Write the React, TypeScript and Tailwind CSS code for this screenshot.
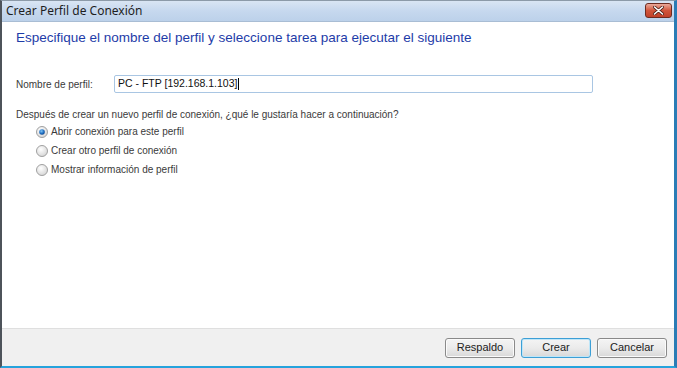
import React from "react";

function Radio({ checked }: { checked?: boolean }) {
  return (
    <svg width="12" height="12" viewBox="0 0 12 12" className="shrink-0">
      <defs>
        <radialGradient id={checked ? "rc" : "ru"} cx="0.4" cy="0.35" r="0.7">
          <stop offset="0" stopColor="#ffffff" />
          <stop offset="1" stopColor="#d4d4d4" />
        </radialGradient>
        <radialGradient id="dot" cx="0.4" cy="0.35" r="0.7">
          <stop offset="0" stopColor="#7fc3f5" />
          <stop offset="0.6" stopColor="#1f6fc1" />
          <stop offset="1" stopColor="#0d3f86" />
        </radialGradient>
      </defs>
      <circle cx="6" cy="6" r="5.5" fill={checked ? "url(#rc)" : "url(#ru)"} stroke="#a0a0a0" strokeWidth="1" />
      {checked && <circle cx="6" cy="6" r="2.8" fill="url(#dot)" />}
    </svg>
  );
}

function Btn({ label, focus }: { label: string; focus?: boolean }) {
  return (
    <button
      className={
        "h-[20px] w-[70px] rounded-[3px] border text-[11px] text-[#222] bg-gradient-to-b from-[#f4f4f4] via-[#ebebeb] to-[#d8d8d8] " +
        (focus ? "border-[#3c9fd6] shadow-[inset_0_0_0_1px_#bfe6f8]" : "border-[#8a8a8a] shadow-[inset_0_0_0_1px_#fbfbfb]")
      }
      style={{ fontFamily: '"Liberation Sans", Arial, sans-serif' }}
    >
      {label}
    </button>
  );
}

export default function App() {
  return (
    <div
      className="w-[677px] h-[368px] flex flex-col overflow-hidden bg-white border-l-2 border-l-[#4d535a] border-t border-t-[#8c9aa8] border-b-2 border-b-[#26a3dc] border-r-[3px] border-r-[#2a7cb5]"
      style={{ fontFamily: '"Liberation Sans", Arial, sans-serif' }}
    >
      <div className="h-[21px] shrink-0 flex items-center justify-between pl-[4px] pr-[2px] bg-gradient-to-b from-[#d9e5f3] via-[#c6d8ee] to-[#bcd1ea] border-b border-b-[#a9bdd4]">
        <span className="text-[12px] text-[#1e1e1e]" style={{ fontFamily: '"Noto Sans", "Liberation Sans", sans-serif' }}>
          Crear Perfil de Conexión
        </span>
        <div className="w-[27px] h-[15px] mt-[-2px] rounded-[3px] border border-[#6d2b20] bg-gradient-to-b from-[#e9a99a] via-[#d1553b] to-[#c0412a] flex items-center justify-center">
          <svg width="11" height="9" viewBox="0 0 11 9">
            <path d="M1.5 1 L9.5 8 M9.5 1 L1.5 8" stroke="#4a1e16" strokeWidth="3" strokeLinecap="round" />
            <path d="M1.5 1 L9.5 8 M9.5 1 L1.5 8" stroke="#ffffff" strokeWidth="1.6" strokeLinecap="round" />
          </svg>
        </div>
      </div>
      <div className="flex-1 flex flex-col px-[14px]">
        <div className="mt-[7px] text-[13.5px] text-[#1e3ca8] leading-[18px]">
          Especifique el nombre del perfil y seleccione tarea para ejecutar el siguiente
        </div>
        <div className="mt-[28px] flex items-center text-[10px] text-[#3a3a3a]">
          <span className="w-[98px]">Nombre de perfil:</span>
          <div className="w-[479px] h-[18px] border border-[#a9c6e3] rounded-[2px] flex items-center pl-[3px] text-[10.5px] text-[#111]">
            PC - FTP [192.168.1.103]
            <span className="inline-block w-px h-[12px] bg-black ml-[1px]" />
          </div>
        </div>
        <div className="mt-[15px] text-[10px] text-[#3a3a3a] leading-[13px]">
          Después de crear un nuevo perfil de conexión, ¿qué le gustaría hacer a continuación?
        </div>
        <div className="mt-[4px] ml-[20px] flex flex-col gap-[6px] text-[10px] text-[#3a3a3a]">
          <label className="flex items-center gap-[3px] h-[13px]">
            <Radio checked />
            Abrir conexión para este perfil
          </label>
          <label className="flex items-center gap-[3px] h-[13px]">
            <Radio />
            Crear otro perfil de conexión
          </label>
          <label className="flex items-center gap-[3px] h-[13px]">
            <Radio />
            Mostrar información de perfil
          </label>
        </div>
      </div>
      <div className="h-[38px] shrink-0 bg-[#f0f0f0] border-t border-t-[#dfdfdf] flex items-center justify-end gap-[6px] pr-[7px]">
        <Btn label="Respaldo" />
        <Btn label="Crear" focus />
        <Btn label="Cancelar" />
      </div>
    </div>
  );
}
